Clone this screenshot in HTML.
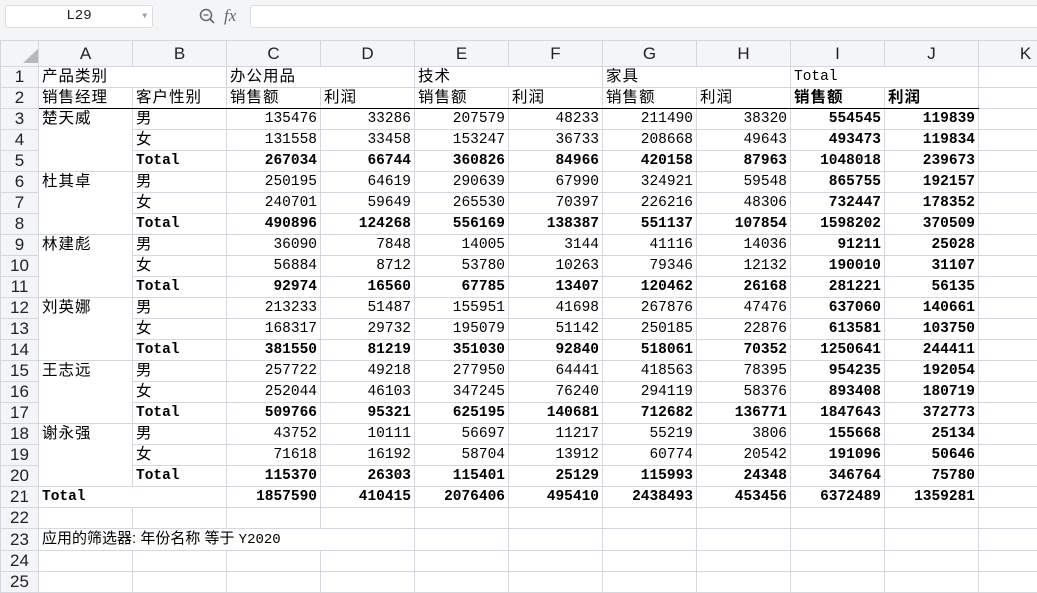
<!DOCTYPE html>
<html><head><meta charset="utf-8"><style>
*{margin:0;padding:0;box-sizing:border-box}
body{width:1037px;height:582px;overflow:hidden;background:#f4f5f7;font-family:"Liberation Sans","Noto Sans CJK SC",sans-serif;position:relative}
.nb{position:absolute;left:5px;top:5px;width:148px;height:23px;background:#fff;border:1px solid #dcdde1;border-radius:3px;font:14px "Liberation Mono",monospace;color:#222;text-align:center;line-height:21px}
.nb span{position:absolute;right:5px;top:0;font-size:8px;color:#999}
.fx{position:absolute;left:224px;top:6px;font:italic 17px "Liberation Serif",serif;color:#666}
.fb{position:absolute;left:250px;top:5px;width:800px;height:23px;background:#fff;border:1px solid #dcdde1;border-radius:3px}
table{position:absolute;left:0;top:40px;width:1072px;border-collapse:collapse;table-layout:fixed;background:#fff}
td{height:21px;border:1px solid #d4d6e0;padding:0 3px;white-space:nowrap;overflow:hidden;font:14.5px "Liberation Mono","Noto Sans CJK SC",monospace;color:#000;text-align:right;line-height:20px}
td.c{font-family:"Liberation Sans","Noto Sans CJK SC",sans-serif;font-size:15.5px;text-align:left;letter-spacing:1px}
td.l{text-align:left}
tr.h td{height:26px;background:#f4f5f7;border-color:#d4d6e0;text-align:center;font:17px "Liberation Sans",sans-serif;color:#222}
td.rh{background:#f4f5f7;text-align:center;font:17px "Liberation Sans",sans-serif;color:#222;padding:0}
.b td:not(.rh),td.b{font-weight:bold}
tr.r2 td:not(.rh){border-bottom:1px solid #000}
td.vl{border-left:1px solid #000}
</style></head><body>
<div class="nb">L29<span>▼</span></div>
<svg style="position:absolute;left:199px;top:8px" width="18" height="18"><circle cx="7" cy="7" r="5.5" fill="none" stroke="#666" stroke-width="1.5"/><line x1="4.5" y1="7" x2="9.5" y2="7" stroke="#666" stroke-width="1.3"/><line x1="11" y1="11" x2="15" y2="15" stroke="#666" stroke-width="1.6"/></svg>
<div class="fx">fx</div>
<div class="fb"></div>
<table>
<colgroup><col style="width:38px"><col style="width:94px"><col style="width:94px"><col style="width:94px"><col style="width:94px"><col style="width:94px"><col style="width:94px"><col style="width:94px"><col style="width:94px"><col style="width:94px"><col style="width:94px"><col style="width:94px"></colgroup>
<tr class="h"><td><svg width="22" height="20" style="display:block;margin:3px 0 0 14px"><polygon points="22,2 22,18 5,18" fill="#b8b8b8"/></svg></td><td>A</td><td>B</td><td>C</td><td>D</td><td>E</td><td>F</td><td>G</td><td>H</td><td>I</td><td>J</td><td>K</td></tr>
<tr><td class="rh">1</td><td class="c" colspan="2">产品类别</td><td class="c" colspan="2">办公用品</td><td class="c" colspan="2">技术</td><td class="c" colspan="2">家具</td><td class="l" colspan="2">Total</td><td></td></tr>
<tr class="r2"><td class="rh">2</td><td class="c">销售经理</td><td class="c">客户性别</td><td class="c">销售额</td><td class="c">利润</td><td class="c">销售额</td><td class="c">利润</td><td class="c">销售额</td><td class="c">利润</td><td class="c" style="font-weight:bold">销售额</td><td class="c" style="font-weight:bold">利润</td><td style="border-bottom-color:#d4d6e0"></td></tr>

<tr><td class="rh">3</td><td class="c" rowspan="3" style="vertical-align:top">楚天威</td><td class="c">男</td><td class="vl">135476</td><td>33286</td><td>207579</td><td>48233</td><td>211490</td><td>38320</td><td class="b">554545</td><td class="b">119839</td><td></td></tr>
<tr><td class="rh">4</td><td class="c">女</td><td class="vl">131558</td><td>33458</td><td>153247</td><td>36733</td><td>208668</td><td>49643</td><td class="b">493473</td><td class="b">119834</td><td></td></tr>
<tr class="b"><td class="rh">5</td><td class="l">Total</td><td class="vl">267034</td><td>66744</td><td>360826</td><td>84966</td><td>420158</td><td>87963</td><td>1048018</td><td>239673</td><td></td></tr>

<tr><td class="rh">6</td><td class="c" rowspan="3" style="vertical-align:top">杜其卓</td><td class="c">男</td><td class="vl">250195</td><td>64619</td><td>290639</td><td>67990</td><td>324921</td><td>59548</td><td class="b">865755</td><td class="b">192157</td><td></td></tr>
<tr><td class="rh">7</td><td class="c">女</td><td class="vl">240701</td><td>59649</td><td>265530</td><td>70397</td><td>226216</td><td>48306</td><td class="b">732447</td><td class="b">178352</td><td></td></tr>
<tr class="b"><td class="rh">8</td><td class="l">Total</td><td class="vl">490896</td><td>124268</td><td>556169</td><td>138387</td><td>551137</td><td>107854</td><td>1598202</td><td>370509</td><td></td></tr>

<tr><td class="rh">9</td><td class="c" rowspan="3" style="vertical-align:top">林建彪</td><td class="c">男</td><td class="vl">36090</td><td>7848</td><td>14005</td><td>3144</td><td>41116</td><td>14036</td><td class="b">91211</td><td class="b">25028</td><td></td></tr>
<tr><td class="rh">10</td><td class="c">女</td><td class="vl">56884</td><td>8712</td><td>53780</td><td>10263</td><td>79346</td><td>12132</td><td class="b">190010</td><td class="b">31107</td><td></td></tr>
<tr class="b"><td class="rh">11</td><td class="l">Total</td><td class="vl">92974</td><td>16560</td><td>67785</td><td>13407</td><td>120462</td><td>26168</td><td>281221</td><td>56135</td><td></td></tr>

<tr><td class="rh">12</td><td class="c" rowspan="3" style="vertical-align:top">刘英娜</td><td class="c">男</td><td class="vl">213233</td><td>51487</td><td>155951</td><td>41698</td><td>267876</td><td>47476</td><td class="b">637060</td><td class="b">140661</td><td></td></tr>
<tr><td class="rh">13</td><td class="c">女</td><td class="vl">168317</td><td>29732</td><td>195079</td><td>51142</td><td>250185</td><td>22876</td><td class="b">613581</td><td class="b">103750</td><td></td></tr>
<tr class="b"><td class="rh">14</td><td class="l">Total</td><td class="vl">381550</td><td>81219</td><td>351030</td><td>92840</td><td>518061</td><td>70352</td><td>1250641</td><td>244411</td><td></td></tr>

<tr><td class="rh">15</td><td class="c" rowspan="3" style="vertical-align:top">王志远</td><td class="c">男</td><td class="vl">257722</td><td>49218</td><td>277950</td><td>64441</td><td>418563</td><td>78395</td><td class="b">954235</td><td class="b">192054</td><td></td></tr>
<tr><td class="rh">16</td><td class="c">女</td><td class="vl">252044</td><td>46103</td><td>347245</td><td>76240</td><td>294119</td><td>58376</td><td class="b">893408</td><td class="b">180719</td><td></td></tr>
<tr class="b"><td class="rh">17</td><td class="l">Total</td><td class="vl">509766</td><td>95321</td><td>625195</td><td>140681</td><td>712682</td><td>136771</td><td>1847643</td><td>372773</td><td></td></tr>

<tr><td class="rh">18</td><td class="c" rowspan="3" style="vertical-align:top">谢永强</td><td class="c">男</td><td class="vl">43752</td><td>10111</td><td>56697</td><td>11217</td><td>55219</td><td>3806</td><td class="b">155668</td><td class="b">25134</td><td></td></tr>
<tr><td class="rh">19</td><td class="c">女</td><td class="vl">71618</td><td>16192</td><td>58704</td><td>13912</td><td>60774</td><td>20542</td><td class="b">191096</td><td class="b">50646</td><td></td></tr>
<tr class="b"><td class="rh">20</td><td class="l">Total</td><td class="vl">115370</td><td>26303</td><td>115401</td><td>25129</td><td>115993</td><td>24348</td><td>346764</td><td>75780</td><td></td></tr>

<tr class="b"><td class="rh">21</td><td class="l" colspan="2">Total</td><td class="vl">1857590</td><td>410415</td><td>2076406</td><td>495410</td><td>2438493</td><td>453456</td><td>6372489</td><td>1359281</td><td></td></tr>
<tr><td class="rh">22</td><td></td><td></td><td></td><td></td><td></td><td></td><td></td><td></td><td></td><td></td><td></td></tr>
<tr><td class="rh">23</td><td class="c" colspan="4" style="font-size:15px;letter-spacing:0">应用的筛选器: 年份名称 等于 <span style="font-family:'Liberation Mono',monospace;font-size:14px">Y2020</span></td><td></td><td></td><td></td><td></td><td></td><td></td><td></td></tr>
<tr><td class="rh">24</td><td></td><td></td><td></td><td></td><td></td><td></td><td></td><td></td><td></td><td></td><td></td></tr>
<tr><td class="rh">25</td><td></td><td></td><td></td><td></td><td></td><td></td><td></td><td></td><td></td><td></td><td></td></tr>
</table>
</body></html>
